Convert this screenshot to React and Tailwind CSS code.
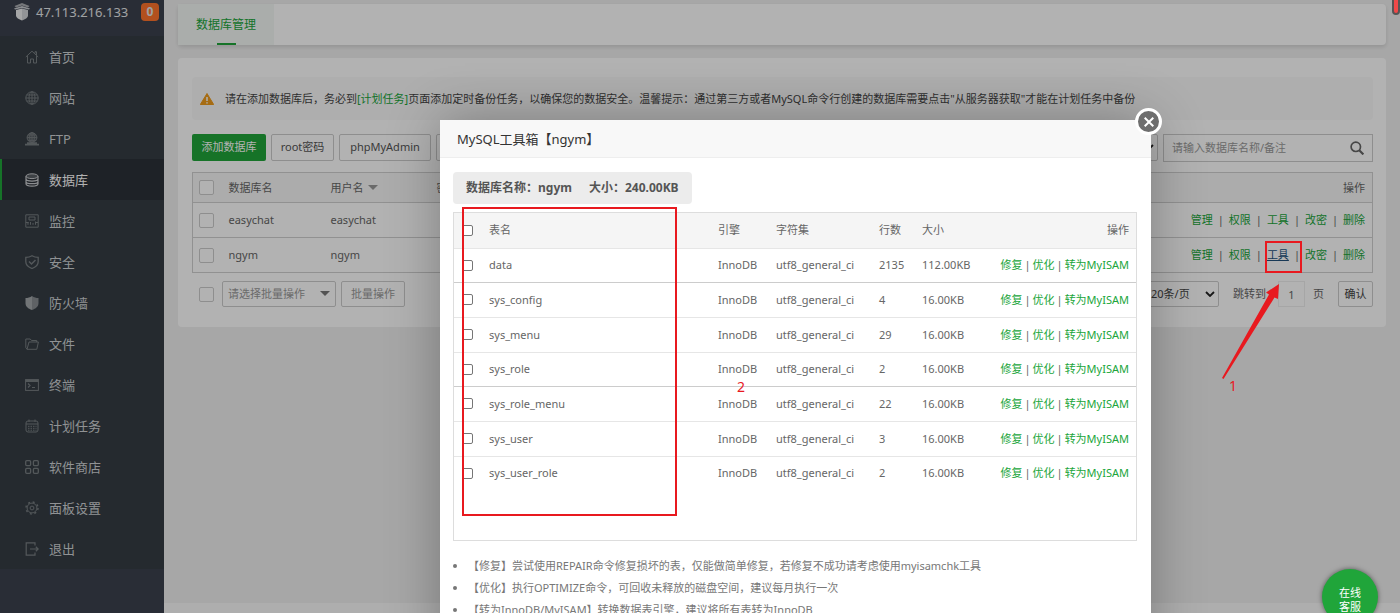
import { clsx } from "clsx"

const NAV_ITEMS = [
  { icon: "home", label: "首页" },
  { icon: "globe", label: "网站" },
  { icon: "ftp", label: "FTP" },
  { icon: "database", label: "数据库", active: true },
  { icon: "monitor", label: "监控" },
  { icon: "shield", label: "安全" },
  { icon: "firewall", label: "防火墙" },
  { icon: "folder", label: "文件" },
  { icon: "terminal", label: "终端" },
  { icon: "calendar", label: "计划任务" },
  { icon: "apps", label: "软件商店" },
  { icon: "gear", label: "面板设置" },
  { icon: "exit", label: "退出" },
]

const DATABASES = ["easychat", "ngym"]
const ACTIONS = ["管理", "权限", "工具", "改密", "删除"]

const TABLES = [
  { name: "data", rows: "2135", size: "112.00KB" },
  { name: "sys_config", rows: "4", size: "16.00KB" },
  { name: "sys_menu", rows: "29", size: "16.00KB" },
  { name: "sys_role", rows: "2", size: "16.00KB" },
  { name: "sys_role_menu", rows: "22", size: "16.00KB" },
  { name: "sys_user", rows: "3", size: "16.00KB" },
  { name: "sys_user_role", rows: "2", size: "16.00KB" },
]

const TABLE_ACTIONS = ["修复", "优化", "转为MyISAM"]

const TIPS = [
  "【修复】尝试使用REPAIR命令修复损坏的表，仅能做简单修复，若修复不成功请考虑使用myisamchk工具",
  "【优化】执行OPTIMIZE命令，可回收未释放的磁盘空间，建议每月执行一次",
  "【转为InnoDB/MyISAM】转换数据表引擎，建议将所有表转为InnoDB",
]

const ICON_PATHS = {
  home: <path d="M.8 7 7 1.2 13.2 7M2.5 6v7h3V9h3v4h3V6M10 3.500V1.700h1.500V5" />,
  globe: (
    <>
      <circle cx="7" cy="7" r="6.200" />
      <ellipse cx="7" cy="7" rx="3" ry="6.200" />
      <path d="M.8 7h12.400M7 .8v12.400M1.700 4h10.600M1.700 10h10.600" />
    </>
  ),
  ftp: (
    <>
      <circle cx="7" cy="5.600" r="4.900" fill="currentColor" fillOpacity=".35" />
      <ellipse cx="7" cy="5.600" rx="2.300" ry="4.900" />
      <path d="M2.100 5.600h9.800M7 .7v9.800M3 3h8M3 8.300h8" />
      <path d="M0 12.600h14M2 11h10" strokeWidth="1.600" />
    </>
  ),
  database: (
    <>
      <ellipse cx="7" cy="3.200" rx="6" ry="2.400" fill="currentColor" fillOpacity=".3" />
      <path d="M1 3.200v7.600c0 3.200 12 3.200 12 0V3.200M1 5.800c0 3 12 3 12 0M1 8.400c0 3 12 3 12 0" strokeWidth="1.200" />
    </>
  ),
  monitor: (
    <path d="M.8.800h12.400v12.400H.8zM4 3h6v3H4zM3 10.800V9M5.500 10.800V8M8 10.800V9M10.500 10.800V7.500M.8 8.500h3M11 8.500h2" />
  ),
  shield: (
    <>
      <path d="M7 .7c2 1.200 4 1.600 6.200 1.600v4.500c0 3.200-2.500 5.300-6.200 6.700C3.300 12.100.8 10 .8 6.800V2.300C3 2.300 5 1.900 7 .7Z" strokeWidth="1.300" />
      <path d="m4 6.500 2.500 2.500L10.500 5" strokeWidth="1.500" />
    </>
  ),
  firewall: (
    <>
      <path d="M7 0c2 1.400 4.200 2 6.500 2v5c0 3.500-2.700 5.700-6.500 7Z" fill="currentColor" fillOpacity=".75" stroke="none" />
      <path d="M7 0C5 1.400 2.800 2 .5 2v5c0 3.500 2.700 5.700 6.500 7Z" fill="currentColor" stroke="none" />
    </>
  ),
  folder: <path d="M2 12.300.8 10.500V2h4.400l1.300 1.500h5.200V5M2 12.300h9.800L13.400 5H4L2 12.300Z" />,
  terminal: (
    <>
      <rect x=".6" y="1.600" width="12.800" height="10.800" />
      <path d="M.6 2.800h12.800" strokeWidth="2.400" />
      <path d="m3 5.500 2 2-2 2M7 9.500h3" strokeWidth="1.200" />
    </>
  ),
  calendar: (
    <>
      <rect x="1" y="2" width="12" height="11" rx="2" />
      <path d="M1 5h12M4 .5V3M10 .5V3" />
      <path d="M3 7.300h8.500M3 9.300h8.500M3 11.200h8.500" strokeDasharray="1.500 1" />
    </>
  ),
  apps: (
    <g strokeWidth="1.300">
      <rect x=".7" y=".7" width="4.900" height="4.900" rx="1" />
      <rect x="8.400" y=".7" width="4.900" height="4.900" rx="1" />
      <rect x=".7" y="8.400" width="4.900" height="4.900" rx="1" />
      <rect x="8.400" y="8.400" width="4.900" height="4.900" rx="1" />
    </g>
  ),
  gear: (
    <>
      <circle cx="7" cy="7" r="4.900" />
      <circle cx="7" cy="7" r="1.900" />
      <circle cx="7" cy="7" r="6" strokeWidth="1.400" strokeDasharray="2 2.710" />
    </>
  ),
  exit: <path d="M10 3.500V.9H1.200v12.200H10v-2.600M5 7h8M10.800 4.800 13.200 7l-2.400 2.200" strokeWidth="1.200" />,
}

const NavIcon = ({ name, className }) => (
  <svg viewBox="0 0 14 14" fill="none" stroke="currentColor" className={clsx("h-3.5 w-3.5 shrink-0", className)} aria-hidden="true">
    {ICON_PATHS[name]}
  </svg>
)

const Sidebar = () => (
  <aside className="flex w-[164px] shrink-0 flex-col bg-[#3c414e]">
    <div className="flex h-9 items-start pl-3.5 pt-[3px] text-[13px] leading-[18px] text-[#e6e8ea]">
      <svg viewBox="0 0 16 18" className="h-[18px] w-4 shrink-0" aria-hidden="true">
        <path d="M8 0 15.500 3 14 4.500 8 2.500 2 4.500.5 3Z" fill="#a9acb0" />
        <path d="M0 5.500 8 3l8 2.500-1 1L8 5 1 6.500Z" fill="#c9ccd0" />
        <path d="M8 5.500 14 7v5.500c0 2-3 4-6 5Z" fill="#d2d5d8" />
        <path d="M8 5.500 2 7v5.500c0 2 3 4 6 5Z" fill="#eceef0" />
      </svg>
      <span className="ml-1.5">47.113.216.133</span>
      <span className="ml-auto mr-[5px] flex h-[18px] w-[18px] items-center justify-center rounded bg-[#ff732c] text-xs font-bold">0</span>
    </div>
    <nav className="bg-[#353d44]">
      {NAV_ITEMS.map((item) => (
        <a
          key={item.label}
          href="#"
          className={clsx(
            "flex h-[41px] items-center gap-2.5 border-l-2 pl-[23px] text-[13px] leading-5",
            item.active ? "border-[#20a53a] bg-[#2c3138] text-white" : "border-transparent text-[#cfd2d4]"
          )}
        >
          <NavIcon
            name={item.icon}
            className={item.active ? "text-[#c8cbce]" : item.icon === "firewall" ? "text-[#a4a8ab]" : "text-[#787e82]"}
          />
          {item.label}
        </a>
      ))}
    </nav>
  </aside>
)

const RowCheckbox = ({ label }) => (
  <input type="checkbox" aria-label={label} className="block h-[15px] w-[15px] appearance-none rounded-[2px] border border-[#ccc] bg-white" />
)

const SelectBox = ({ label, option, className, children }) => (
  <div className={clsx("relative", className)}>
    <select aria-label={label} className="h-full w-full appearance-none rounded-[2px] border border-[#ccc] bg-white pl-[5px] text-[11px]">
      {option && <option>{option}</option>}
    </select>
    {children}
  </div>
)

const Chevron = ({ className }) => (
  <svg viewBox="0 0 10 6" className={clsx("pointer-events-none absolute h-1.5 w-2.5", className)} fill="none" stroke="#222" strokeWidth="1.800" aria-hidden="true">
    <path d="m1 1 4 4 4-4" />
  </svg>
)

const DatabaseTable = () => (
  <table className="mt-2.5 w-full table-fixed border border-[#d0d0d0] text-left text-[11px] leading-4 text-[#666]">
    <thead>
      <tr className="h-[30px] bg-[#f6f6f6]">
        <th className="w-9 pl-1.5"><RowCheckbox label="全选" /></th>
        <th className="w-[102px] font-normal">数据库名</th>
        <th className="w-[106px] font-normal">
          <span className="flex items-center gap-1">
            用户名
            <svg viewBox="0 0 10 5" className="h-[5px] w-2.5" aria-hidden="true"><path d="M0 0h10L5 5Z" fill="#999" /></svg>
          </span>
        </th>
        <th className="font-normal">密码</th>
        <th className="w-[220px] pr-[7px] text-right font-normal">操作</th>
      </tr>
    </thead>
    <tbody>
      {DATABASES.map((name) => (
        <tr key={name} className="h-[35px] border-t border-[#d0d0d0]">
          <td className="pl-1.5"><RowCheckbox label={name} /></td>
          <td>{name}</td>
          <td>{name}</td>
          <td />
          <td className="pr-[7px]">
            <div className="flex items-center justify-end gap-[5px]">
              {ACTIONS.map((action, i) => (
                <span key={action} className="flex items-center gap-[5px]">
                  {i > 0 && <span>|</span>}
                  <a href="#" className={name === "ngym" && action === "工具" ? "text-[#23527c] underline" : "text-[#20a53a]"}>
                    {action}
                  </a>
                </span>
              ))}
            </div>
          </td>
        </tr>
      ))}
    </tbody>
  </table>
)

const toolButton = "h-[27px] rounded-[2px] border border-[#ccc] bg-white text-[#555]"

const DatabasePage = () => (
  <main className="flex min-w-0 flex-1 flex-col bg-[#f0f0f0] text-[11px] text-[#666]">
    <div className="mx-3.5 mt-1 h-[41px] rounded bg-white shadow-[0_2px_4px_rgba(0,0,0,0.12)]">
      <a href="#" className="flex h-full w-24 flex-col items-center bg-[#f4f8f5] pt-3 text-xs leading-[18px] text-[#20a53a]">
        数据库管理
        <span className="mt-auto h-0.5 w-[19px] bg-[#20a53a]" />
      </a>
    </div>

    <section className="mx-3.5 mt-[13px] rounded bg-white pb-5 pl-3.5 pr-[13px] pt-[19px]">
      <p className="flex h-[43px] items-center rounded-sm bg-[#fafafa] pl-2 text-[11px] leading-4 text-[#444]">
        <svg viewBox="0 0 14 12" className="mr-[11px] h-3 w-3.5 shrink-0" aria-hidden="true">
          <path d="M7 .5 13.700 11.500H.3Z" fill="#ee9b1c" stroke="#ee9b1c" strokeLinejoin="round" />
          <path d="M7 4v4M7 9.200v1.300" stroke="#fff" strokeWidth="1.500" />
        </svg>
        <span>
          请在添加数据库后，务必到<a href="#" className="text-[#20a53a]">[计划任务]</a>
          页面添加定时备份任务，以确保您的数据安全。温馨提示：通过第三方或者MySQL命令行创建的数据库需要点击"从服务器获取"才能在计划任务中备份
        </span>
      </p>

      <div className="mt-3.5 flex gap-[5px]">
        <button type="button" className="h-[27px] w-[74px] rounded-[2px] bg-[#20a53a] text-white">添加数据库</button>
        <button type="button" className={clsx(toolButton, "w-[63px]")}>root密码</button>
        <button type="button" className={clsx(toolButton, "w-[92px]")}>phpMyAdmin</button>
        <button type="button" aria-label="更多" className={clsx(toolButton, "w-20")} />
        <SelectBox label="分类" className="ml-auto h-[27px] w-24">
          <Chevron className="right-1 top-2.5" />
        </SelectBox>
        <label className="flex h-7 w-[210px] items-center border border-[#ccc] bg-white px-2">
          <input
            type="text"
            aria-label="搜索数据库"
            placeholder="请输入数据库名称/备注"
            className="min-w-0 flex-1 bg-transparent outline-none placeholder:text-[#999]"
          />
          <svg viewBox="0 0 14 14" className="h-3.5 w-3.5 shrink-0" fill="none" stroke="#666" strokeWidth="1.700" aria-hidden="true">
            <circle cx="5.800" cy="5.800" r="4.700" />
            <path d="m9.200 9.200 4.200 4.200" strokeWidth="2.200" />
          </svg>
        </label>
      </div>

      <DatabaseTable />

      <div className="mt-2 flex h-[26px] items-center">
        <span className="ml-[7px]"><RowCheckbox label="选择全部数据库" /></span>
        <SelectBox label="批量操作类型" option="请选择批量操作" className="ml-2 h-[26px] w-[114px] text-[#999]">
          <svg viewBox="0 0 10 5" className="pointer-events-none absolute right-1.5 top-2.5 h-[5px] w-2.5" aria-hidden="true">
            <path d="M0 0h10L5 5Z" fill="#777" />
          </svg>
        </SelectBox>
        <button type="button" className="ml-[5px] h-[26px] w-16 rounded-[2px] border border-[#ccc] text-[#999]">批量操作</button>
        <SelectBox label="每页条数" option="20条/页" className="ml-auto h-[26px] w-[74px] text-[#444]">
          <Chevron className="right-1 top-2.5" />
        </SelectBox>
        <label className="ml-3.5 flex items-center">
          跳转到
          <input type="text" defaultValue="1" className="ml-3 mr-2 h-[26px] w-[27px] border border-[#eee] text-center" />
          页
        </label>
        <button type="button" className="ml-3.5 h-[26px] w-[35px] rounded-[2px] border border-[#ccc] text-[#444]">确认</button>
      </div>
    </section>
    <footer className="mt-auto h-2.5 bg-[#fafafa]" />
  </main>
)

const TableCheckbox = ({ label }) => (
  <input type="checkbox" aria-label={label} className="block h-[11px] w-[11px] appearance-none rounded-[2px] border border-[#767676] bg-white" />
)

const ToolboxDialog = () => (
  <div
    role="dialog"
    aria-label="MySQL工具箱【ngym】"
    className="absolute left-[440px] top-[120px] w-[711px] bg-white pb-10 text-[11px] text-[#666] shadow-[0_0_50px_rgba(0,0,0,0.3)]"
  >
    <h2 className="h-[38px] border-b border-[#eee] bg-[#f8f8f8] pl-[17px] text-[13px] leading-[38px] text-[#333]">MySQL工具箱【ngym】</h2>
    <button
      type="button"
      aria-label="关闭"
      className="absolute -right-[11px] -top-3 flex h-[27px] w-[27px] items-center justify-center rounded-full border-[3px] border-white bg-[#6e6e6e]"
    >
      <svg viewBox="0 0 10 10" className="h-2.5 w-2.5" stroke="#fff" strokeWidth="2" aria-hidden="true">
        <path d="m.7.7 8.600 8.600M9.300.700.7 9.300" />
      </svg>
    </button>

    <div className="pl-[13px] pr-3.5 pt-3.5">
      <div className="flex h-8 w-fit items-center gap-[17px] rounded-sm bg-[#ececec] px-[13px] text-xs font-bold leading-4 text-[#555]">
        <span>数据库名称：ngym</span>
        <span>大小：240.00KB</span>
      </div>

      <div className="mt-2 h-[329px] border border-[#ddd]">
        <table className="w-full table-fixed text-left leading-4">
          <thead>
            <tr className="h-[35px] bg-[#f5f5f5]">
              <th className="w-[35px] pl-2"><TableCheckbox label="全选" /></th>
              <th className="font-normal">表名</th>
              <th className="w-[58px] font-normal">引擎</th>
              <th className="w-[103px] font-normal">字符集</th>
              <th className="w-[43px] font-normal">行数</th>
              <th className="w-[66px] font-normal">大小</th>
              <th className="w-[148px] pr-[7px] text-right font-normal">操作</th>
            </tr>
          </thead>
          <tbody>
            {TABLES.map((table, i) => (
              <tr
                key={table.name}
                className={clsx("border-t", i % 3 === 0 ? "h-[34px]" : "h-[35px]", i % 3 === 1 ? "border-[#ccc]" : "border-[#e6e6e6]")}
              >
                <td className="pl-2"><TableCheckbox label={table.name} /></td>
                <td>{table.name}</td>
                <td>InnoDB</td>
                <td>utf8_general_ci</td>
                <td>{table.rows}</td>
                <td>{table.size}</td>
                <td className="pr-[7px]">
                  <div className="flex justify-end gap-0.5">
                    {TABLE_ACTIONS.map((action, n) => (
                      <span key={action} className="flex gap-0.5">
                        {n > 0 && <span>|</span>}
                        <a href="#" className="text-[#20a53a]">{action}</a>
                      </span>
                    ))}
                  </div>
                </td>
              </tr>
            ))}
          </tbody>
        </table>
      </div>

      <ul className="mt-3.5 list-disc pl-[15px] leading-[22px] text-[#777]">
        {TIPS.map((tip) => (
          <li key={tip}>{tip}</li>
        ))}
      </ul>
    </div>
  </div>
)

// Red marks drawn on top of everything: the two framed areas, the arrow and the step numbers
const Annotations = () => (
  <div className="pointer-events-none absolute inset-0 text-sm leading-4 text-[#e8191f]">
    <div className="absolute left-[462px] top-[207px] h-[309px] w-[215px] border-2 border-[#e8191f]" />
    <div className="absolute left-[1265px] top-[241px] h-8 w-[37px] border-2 border-[#e8191f]" />
    <svg viewBox="0 0 60 98" className="absolute left-[1221px] top-[283px] h-[98px] w-[60px]" aria-hidden="true">
      <path d="M58 1 57 16 53.500 14.500 2.500 96 1 95 48 11.500 45 9.500Z" fill="#e8191f" />
    </svg>
    <span className="absolute left-[737px] top-[379px]">2</span>
    <span className="absolute left-[1229px] top-[378px]">1</span>
  </div>
)

const App = () => (
  <div className="relative flex h-screen overflow-hidden font-['Noto_Sans','Noto_Sans_CJK_SC',sans-serif]">
    <Sidebar />
    <DatabasePage />
    <div className="absolute inset-0 bg-black/30" />
    <ToolboxDialog />
    <div className="absolute -top-1 right-0 h-[19px] w-2 rounded-full border-2 border-[#555] bg-[#f04848]" />
    <button
      type="button"
      className="absolute right-[22px] top-[569px] flex h-14 w-14 items-center justify-center rounded-full bg-[#20a53a] pt-1.5 text-[11px] leading-[14px] text-white shadow-[0_0_5px_rgba(0,0,0,0.5)]"
    >
      在线
      <br />
      客服
    </button>
    <Annotations />
  </div>
)

export default App
